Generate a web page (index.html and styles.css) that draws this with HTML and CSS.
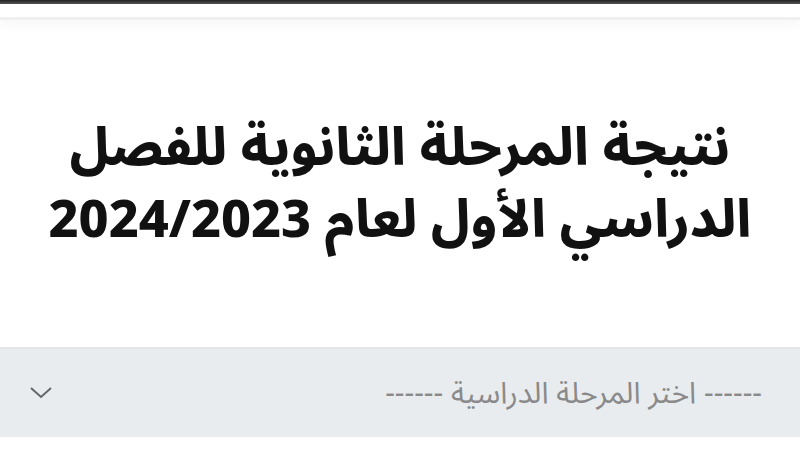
FILE: index.html
```html
<!DOCTYPE html>
<html lang="ar" dir="rtl">
<head>
<meta charset="utf-8">
<link rel="stylesheet" href="styles.css">
</head>
<body>
<div class="topbar"></div>
<div class="header"></div>
<main class="content">
  <h1 class="title">نتيجة المرحلة الثانوية للفصل<br>الدراسي الأول لعام 2024/2023</h1>
  <div class="select">
    <span class="placeholder">------ اختر المرحلة الدراسية ------</span>
    <svg class="chev" width="24" height="14" viewBox="0 0 24 14"><path d="M2 2 L12 11 L22 2" fill="none" stroke="#666" stroke-width="2"/></svg>
  </div>
</main>
</body>
</html>
```
FILE: styles.css
```css
html, body { margin: 0; padding: 0; background: #fff; }
body { width: 800px; height: 450px; overflow: hidden; font-family: "Noto Sans Arabic", "DejaVu Sans", sans-serif; }
.topbar { height: 4px; background: linear-gradient(#222, #555); }
.header { height: 13px; background: #fff; border-bottom: 3px solid #f0f0f0; box-shadow: 0 6px 10px rgba(0,0,0,0.03); }
.content { padding-top: 93px; }
.title { margin: 0; text-align: center; font-size: 52px; font-weight: 800; line-height: 72px; color: #111; }
.select { margin-top: 90px; height: 88px; background: #e9ecef; border-top: 2px solid #e2e4e6; display: flex; align-items: center; justify-content: space-between; padding: 0 38px 0 29px; }
.placeholder { color: #8a8a8a; font-size: 30px; }
.chev { display: block; }
```
